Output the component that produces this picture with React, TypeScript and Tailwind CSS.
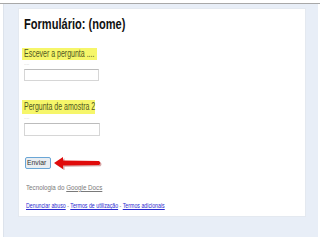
import React from 'react';

const font = { fontFamily: '"Liberation Sans", Arial, sans-serif' };

// the reference is squeezed sideways, so text is squeezed to match
function Squeeze({ children, className = '' }: { children: React.ReactNode; className?: string }) {
  return <span className={`inline-block whitespace-nowrap origin-left ${className}`}>{children}</span>;
}

function Question({ label, top, boxW, boxH, inputW, inputH }: { label: string; top: string; boxW: string; boxH: string; inputW: string; inputH: string }) {
  return (
    <div className={`flex flex-col ${top}`}>
      <div className={`ml-[3px] ${boxH} ${boxW} bg-[#f6f66a] pl-[2px] flex items-center text-[10px] leading-[10px] text-[#4f561f]`}>
        <Squeeze className="scale-x-[0.7]">{label}</Squeeze>
      </div>
      <div className="ml-[5px] h-[9px] text-[6px] leading-[7px] text-[#c2c2c2]">
        <Squeeze className="scale-x-[0.8]">....</Squeeze>
      </div>
      <div className={`ml-[5px] ${inputW} ${inputH} border border-[#d6d6d6] border-t-[#bcbcbc] bg-white`} />
    </div>
  );
}

function Arrow() {
  return (
    <svg width="49" height="14" viewBox="0 0 49 14" className="ml-[3px]">
      <path d="M1 7.5 L10 1.5 L10 5 L46 5.5 Q48 7.5 46 9.5 L10 10 L10 13.5 Z" fill="#8a0000" opacity="0.35" transform="translate(0.5 0.8)" />
      <path d="M0 7 L9 1 L9 4.5 L45 5 Q47.5 7 45 9 L9 9.5 L9 13 Z" fill="#e00b0b" />
    </svg>
  );
}

export default function App() {
  return (
    <div className="w-[320px] h-[240px] bg-white pt-[3px]" style={font}>
      <div className="h-px bg-[#a8a8a8]" />
      <div className="ml-[3px] w-[315px] h-[233px] bg-[#e8eef7] border-l border-[#dde3ec] pt-[4px] pl-[14px]">
        <div className="w-[288px] h-[209px] bg-white border border-[#e4e9f0] flex flex-col">
          <h1 className="ml-[5px] mt-[7px] h-[16px] text-[14px] leading-[16px] font-bold text-[#111]">
            <Squeeze className="scale-x-[0.79]">Formulário: (nome)</Squeeze>
          </h1>

          <Question label="Escever a pergunta ...." top="mt-[16px]" boxW="w-[75px]" boxH="h-[12px]" inputW="w-[75px]" inputH="h-[12px]" />
          <Question label="Pergunta de amostra 2" top="mt-[19px]" boxW="w-[73px]" boxH="h-[14px]" inputW="w-[76px]" inputH="h-[13px]" />

          <div className="mt-[20px] ml-[6px] flex items-center">
            <button className="w-[26px] h-[12px] rounded-[2px] border border-[#6aa6d6] bg-[#e9edf1] text-[8px] leading-[10px] text-[#333] flex items-center justify-center">
              <Squeeze className="scale-x-[0.85] origin-center">Enviar</Squeeze>
            </button>
            <Arrow />
          </div>

          <div className="mt-[13px] ml-[7px] h-[10px] text-[8px] leading-[10px] text-[#7a7a7a]">
            <Squeeze className="scale-x-[0.78]">
              Tecnologia do <span className="underline">Google Docs</span>
            </Squeeze>
          </div>

          <div className="mt-[8px] ml-[7px] h-[9px] text-[7px] leading-[9px] text-[#8a8a8a]">
            <Squeeze className="scale-x-[0.75]">
              <span className="underline text-[#2a2ad0]">Denunciar abuso</span> - <span className="underline text-[#2a2ad0]">Termos de utilização</span> - <span className="underline text-[#2a2ad0]">Termos adicionais</span>
            </Squeeze>
          </div>
        </div>
      </div>
    </div>
  );
}
